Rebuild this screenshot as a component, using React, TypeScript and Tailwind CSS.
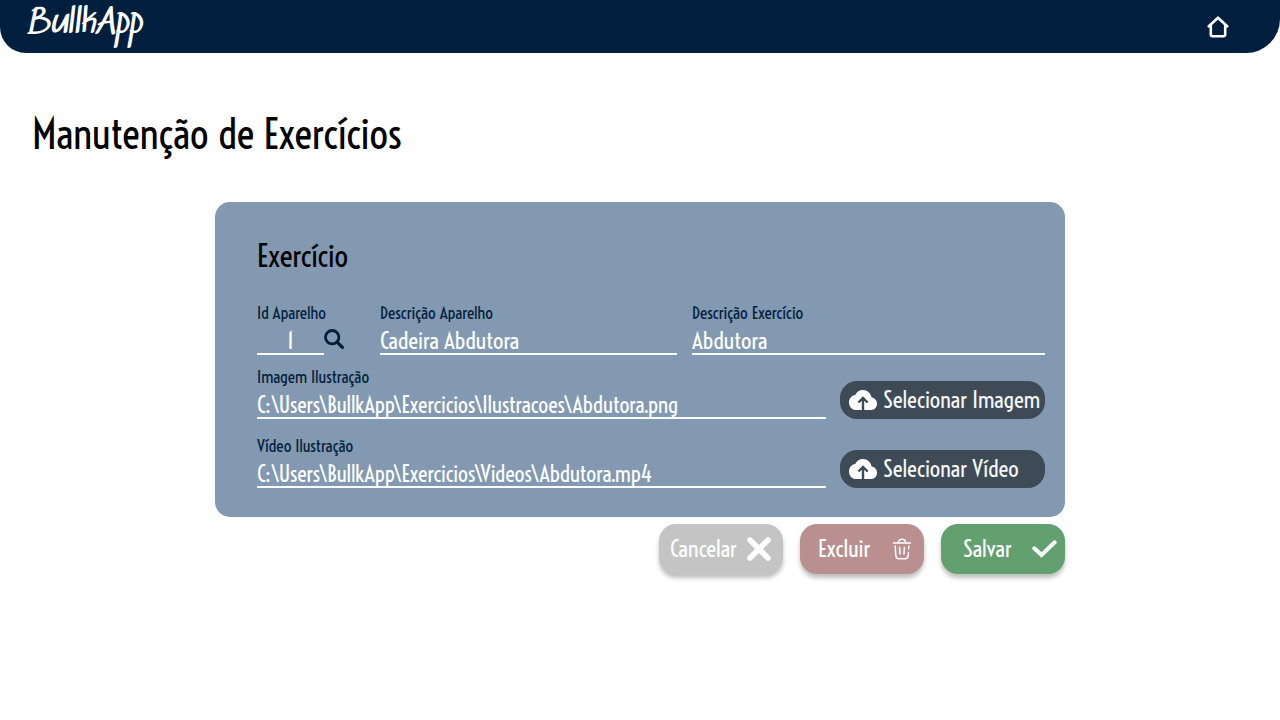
import type { ReactNode } from "react";

type FieldProps = {
  id: string;
  label: string;
  value: string;
  className?: string;
  inputClassName?: string;
};

function Field({ id, label, value, className = "", inputClassName = "text-[23px]" }: FieldProps) {
  return (
    <div className={`flex flex-col ${className}`}>
      <label htmlFor={id} className="text-[17px] leading-5 text-[#001e3d]">
        {label}
      </label>
      <input
        id={id}
        defaultValue={value}
        className={`h-8 w-full border-b-2 border-white bg-transparent pt-1.5 text-white outline-none ${inputClassName}`}
      />
    </div>
  );
}

function CloudUpload() {
  return (
    <svg viewBox="0 0 28 20" className="h-5 w-7 shrink-0" aria-hidden="true">
      <path
        fill="#fff"
        d="M22.6 7.6C21.8 3.300 18.300 0 14 0 10.600 0 7.600 2 6.200 4.900 2.700 5.300 0 8.500 0 12.400 0 16.600 3.100 20 7 20h15.200c3.200 0 5.800-2.800 5.800-6.200 0-3.300-2.400-6-5.400-6.200z"
      />
      <path fill="none" stroke="#3e4a56" strokeWidth="2.400" d="M14 20V8.500M9.400 12.500 14 8l4.600 4.500" />
    </svg>
  );
}

function UploadButton({ children }: { children: ReactNode }) {
  return (
    <button
      type="button"
      className="flex h-[38px] w-[205px] shrink-0 items-center gap-1.5 rounded-[17px] bg-[#3e4a56] pl-[9px] text-[23px] whitespace-nowrap text-[#f4f6f8]"
    >
      <CloudUpload />
      {children}
    </button>
  );
}

function ActionButton({ className, children }: { className: string; children: ReactNode }) {
  return (
    <button
      type="button"
      className={`flex h-[50px] w-[124px] items-center justify-between rounded-[17px] text-[23px] text-white shadow-[0_4px_4px_rgba(0,0,0,0.25)] ${className}`}
    >
      {children}
    </button>
  );
}

export default function App() {
  return (
    <div className="min-h-screen bg-white font-['Voltaire','Roboto_Condensed','Liberation_Sans',sans-serif]">
      <header className="flex h-[53px] items-center justify-between rounded-br-[34px] rounded-bl-[26px] bg-[#001e3d] pr-[51px] pl-[26px]">
        <a href="#inicio" className="pb-1.5 font-['Sedgwick_Ave','Voltaire',cursive] text-[32px] leading-10 text-white">
          BullkApp
        </a>
        <a href="#inicio" aria-label="Início">
          <svg viewBox="0 0 22 22" className="size-[22px]" fill="none" stroke="#fff" strokeWidth="2.600" strokeLinecap="round" strokeLinejoin="round" aria-hidden="true">
            <path d="M1.800 10.300 11 1.700l9.200 8.600M3.800 9v9.300c0 1.200.7 1.900 1.900 1.900h10.600c1.200 0 1.900-.7 1.900-1.900V9" />
          </svg>
        </a>
      </header>

      <main>
        <h1 className="px-8 pt-[58px] text-[41px] leading-[48px]">Manutenção de Exercícios</h1>

        <form className="mx-auto mt-[43px] max-w-[850px]" onSubmit={(e) => e.preventDefault()}>
          <section className="rounded-[15px] bg-[#8399b1] pt-9 pr-5 pb-[29px] pl-[42px]">
            <h2 className="text-[30px] leading-9">Exercício</h2>

            <div className="mt-[29px] flex items-end">
              <Field id="id-aparelho" label="Id Aparelho" value="1" className="w-[67px] shrink-0 whitespace-nowrap" inputClassName="text-center text-[23px]" />
              <button type="button" aria-label="Buscar aparelho" className="mb-1.5 shrink-0">
                <svg viewBox="0 0 20 20" className="size-5" fill="none" stroke="#001e3d" aria-hidden="true">
                  <circle cx="8.200" cy="8.200" r="6.700" strokeWidth="2.800" />
                  <path d="m13.200 13.200 5.200 5.200" strokeWidth="3.200" strokeLinecap="round" />
                </svg>
              </button>
              <Field id="descricao-aparelho" label="Descrição Aparelho" value="Cadeira Abdutora" className="ml-9 w-[297px]" />
              <Field id="descricao-exercicio" label="Descrição Exercício" value="Abdutora" className="ml-[15px] flex-1" />
            </div>

            <div className="mt-3 flex items-end justify-between">
              <Field id="imagem" label="Imagem Ilustração" value="C:\Users\BullkApp\Exercicios\Ilustracoes\Abdutora.png" className="w-[569px]" inputClassName="text-[22px]" />
              <UploadButton>Selecionar Imagem</UploadButton>
            </div>

            <div className="mt-[17px] flex items-end justify-between">
              <Field id="video" label="Vídeo Ilustração" value="C:\Users\BullkApp\Exercicios\Videos\Abdutora.mp4" className="w-[569px]" inputClassName="text-[22px]" />
              <UploadButton>Selecionar Vídeo</UploadButton>
            </div>
          </section>

          <div className="mt-[7px] flex justify-end gap-[17px]">
            <ActionButton className="bg-[#c4c4c4] pr-3 pl-[11px]">
              Cancelar
              <svg viewBox="0 0 24 24" className="size-6 shrink-0" aria-hidden="true">
                <path d="m3 3 18 18M21 3 3 21" stroke="#fff" strokeWidth="5.600" strokeLinecap="round" />
              </svg>
            </ActionButton>
            <ActionButton className="bg-[#b98f8f] pr-3 pl-[18px]">
              Excluir
              <svg viewBox="0 0 20 22" className="h-[22px] w-5 shrink-0" fill="none" stroke="#fff" strokeWidth="1.500" strokeLinecap="round" aria-hidden="true">
                <path d="M1.500 5h17M6.300 4.700C6.500 2.500 7.800 1.200 10 1.200s3.500 1.300 3.700 3.500M3.200 8l.6 9.500c.2 2.200 1.200 3.300 3.200 3.300h6c2 0 3-1.100 3.200-3.300l.2-3M16.600 11l.2-3M7.600 9.500l.4 6.500M12.400 9.500l-.4 6.500" />
              </svg>
            </ActionButton>
            <ActionButton className="bg-[#63a070] pr-2 pl-[22px]">
              Salvar
              <svg viewBox="0 0 25 18" className="h-[18px] w-[25px] shrink-0" aria-hidden="true">
                <path d="m2.300 8.300 7.200 6.700L22.700 2.300" fill="none" stroke="#fff" strokeWidth="4" strokeLinecap="round" />
              </svg>
            </ActionButton>
          </div>
        </form>
      </main>
    </div>
  );
}
